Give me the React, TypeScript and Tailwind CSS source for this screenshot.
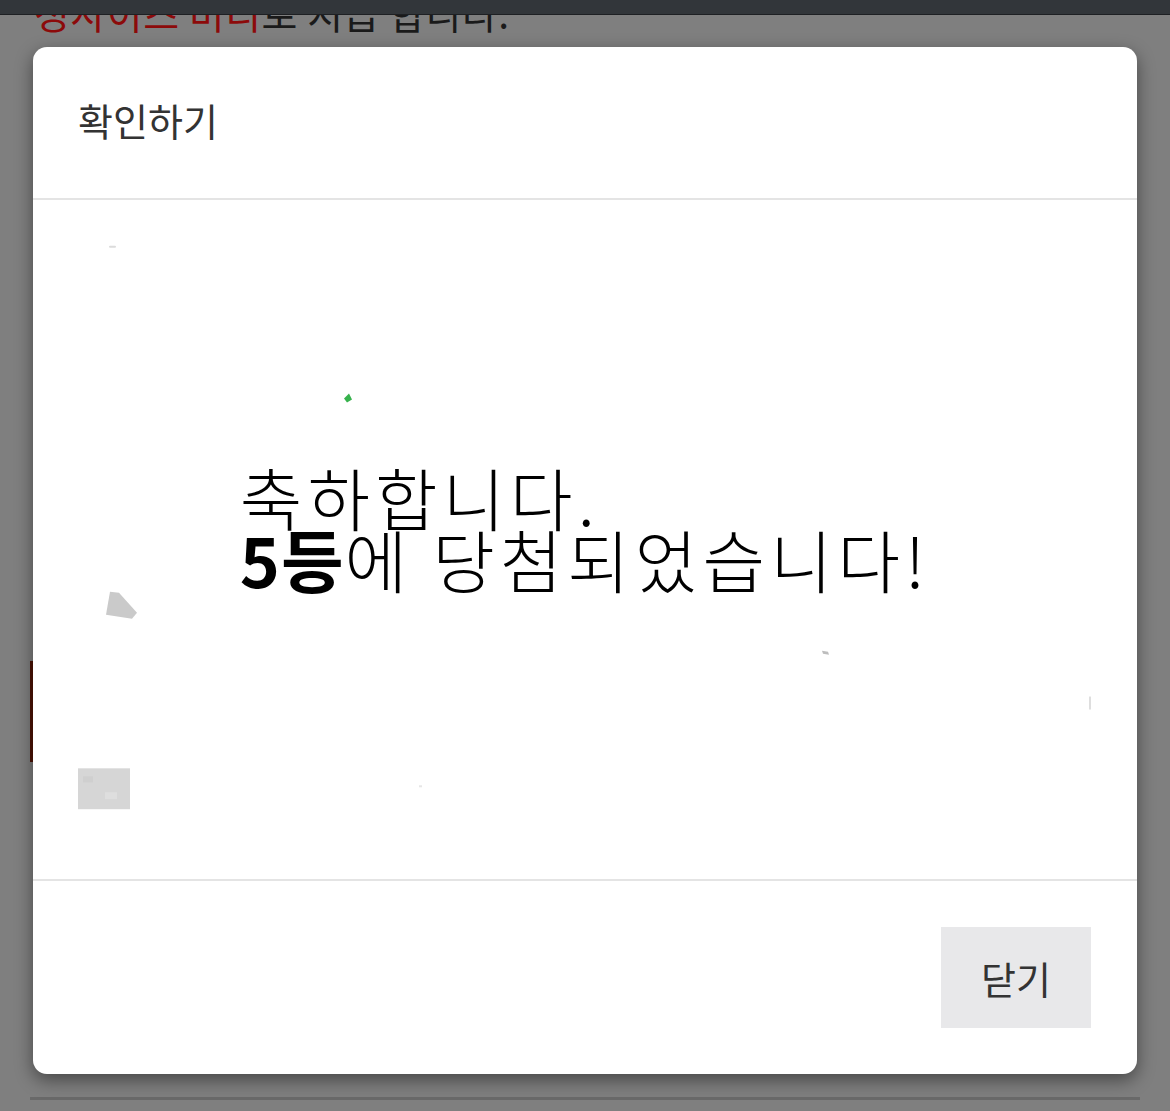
import React from "react";

const font = { fontFamily: '"Noto Sans CJK KR", "Noto Sans", sans-serif' };

function Speckles() {
  // scan dust that sits in the original prize picture
  return (
    <svg className="absolute inset-0 h-full w-full" viewBox="0 0 1104 681" preserveAspectRatio="none">
      <rect x="76" y="46" width="7" height="2" rx="1" fill="#dcdcdc" />
      <path d="M311 199 L316 194 L319 200 L314 203 Z" fill="#37b24d" />
      <path d="M77 393 L86 394 L104 414 L99 420 L73 416 Z" fill="#cacaca" />
      <rect x="45" y="570" width="52" height="41" fill="#d6d6d6" />
      <rect x="50" y="578" width="10" height="6" fill="#cfcfcf" />
      <rect x="72" y="594" width="12" height="7" fill="#dedede" />
      <path d="M789 452 L795 453 L796 456 L790 455 Z" fill="#bdbdbd" />
      <rect x="1056" y="498" width="2" height="13" fill="#dedede" />
      <rect x="386" y="587" width="3" height="2" fill="#e6e6e6" />
    </svg>
  );
}

function PrizeImage() {
  return (
    <div className="relative h-full w-full overflow-hidden bg-white">
      <Speckles />
      <div className="relative flex h-full items-center justify-center pb-[24px]">
        <p className="text-[68px] font-light leading-[62px] tracking-[5px] text-black" style={font}>
          축하합니다.
          <br />
          <span className="font-bold tracking-[1px]">5등</span>에 당첨되었습니다!
        </p>
      </div>
    </div>
  );
}

export default function App() {
  return (
    <div className="relative h-[1111px] w-full overflow-hidden bg-[#7f7f7f]" style={font}>
      {/* status bar */}
      <div className="absolute left-0 right-0 top-0 z-20 h-[15px] border-b border-[#1e2023] bg-[#32363a]" />

      {/* page behind the overlay */}
      <div className="-mt-[7px] pl-[34px] text-[39px] leading-[38px] tracking-[0.5px] text-[#1a1a1a]">
        <span className="text-[#8c0a0a]">정사이즈 미디</span>로 지급 합니다.
      </div>
      <div className="ml-[30px] mt-[630px] h-[101px] w-[4px] bg-[#4d1204]" />
      <div className="mx-[30px] mt-[335px] h-[3px] bg-[#696969]" />

      {/* dialog */}
      <div className="absolute left-[33px] top-[47px] z-10 flex w-[1104px] flex-col overflow-hidden rounded-[14px] bg-white shadow-[0_6px_18px_rgba(0,0,0,0.45)]">
        <div className="flex h-[153px] items-center border-b-2 border-[#e4e4e4] px-[45px] pb-[6px]">
          <h2 className="text-[38px] font-normal text-[#333]">확인하기</h2>
        </div>
        <div className="h-[681px] border-b-2 border-[#e4e4e4]">
          <PrizeImage />
        </div>
        <div className="flex h-[193px] items-center justify-end px-[46px]">
          <button className="flex h-[101px] w-[150px] items-center justify-center bg-[#e8e8ea] text-[38px] text-[#333]">
            닫기
          </button>
        </div>
      </div>
    </div>
  );
}
